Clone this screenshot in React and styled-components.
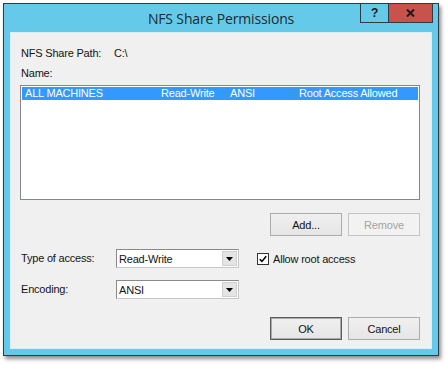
import React from 'react';
import styled, { createGlobalStyle } from 'styled-components';

const Global = createGlobalStyle`
  html, body { margin: 0; padding: 0; background: #ffffff; }
  body {
    width: 447px; height: 366px; overflow: hidden;
    font-family: "Liberation Sans", Arial, sans-serif;
    font-size: 11px; color: #141414;
    letter-spacing: -0.2px;
  }
  * { box-sizing: border-box; }
`;

const Page = styled.div`
  padding: 3px 0 0 3px;
`;

const Window = styled.div`
  width: 436px;
  height: 353px;
  border: 1px solid #2f3d42;
  background: #65c9ea;
  display: flex;
  flex-direction: column;
  box-shadow: 2px 3px 4px rgba(0, 0, 0, 0.45);
`;

const TitleBar = styled.div`
  height: 28px;
  display: grid;
  grid-template-columns: 1fr auto 1fr;
  align-items: start;
`;

const Title = styled.div`
  grid-column: 2;
  align-self: center;
  font-family: "Open Sans", "Noto Sans", sans-serif;
  font-size: 14px;
  color: #1c2b2b;
  letter-spacing: -0.15px;
  padding-top: 1px;
`;

const Caption = styled.div`
  grid-column: 3;
  justify-self: end;
  display: flex;
  margin-right: 5px;
`;

const CapButton = styled.div`
  width: ${p => p.$w}px;
  height: 19px;
  background: ${p => p.$bg};
  border: 1px solid #2f3d42;
  border-top: none;
  border-right: ${p => (p.$last ? '1px solid #2f3d42' : 'none')};
  display: flex;
  align-items: center;
  justify-content: center;
  font-family: "Liberation Sans", Arial, sans-serif;
  font-weight: bold;
  font-size: 12px;
  color: #1a1a1a;
`;

const Panel = styled.div`
  flex: 1;
  margin: 0 6px 6px 6px;
  background: #f0f0f0;
  border: 1px solid #d9eef6;
  padding: 14px 11px 0 9px;
  display: flex;
  flex-direction: column;
`;

const PathRow = styled.div`
  display: grid;
  grid-template-columns: 93px auto;
  height: 13px;
  line-height: 13px;
  padding-left: 1px;
`;

const Label = styled.div`
  line-height: 13px;
  padding-left: 1px;
  margin-top: ${p => p.$mt || 0}px;
`;

const List = styled.div`
  margin-top: 5px;
  height: 115px;
  background: #ffffff;
  border: 1px solid #828790;
  padding: 1px;
`;

const Row = styled.div`
  height: 13px;
  line-height: 13px;
  background: #3399ff;
  color: #ffffff;
  display: grid;
  grid-template-columns: 136px 69px 69px 1fr;
  padding-left: 3px;
`;

const ButtonRow = styled.div`
  margin-top: ${p => p.$mt}px;
  display: flex;
  justify-content: flex-end;
  gap: 6px;
`;

const Button = styled.div`
  width: 72px;
  height: 23px;
  display: flex;
  align-items: center;
  justify-content: center;
  background: ${p => (p.$disabled ? '#f2f2f2' : 'linear-gradient(#f0f0f0, #e5e5e5)')};
  border: 1px solid ${p => (p.$default ? '#5c5c5c' : p.$disabled ? '#c4c4c4' : '#acacac')};
  box-shadow: ${p => (p.$default ? 'inset 0 0 0 1px #a9a9a9' : 'none')};
  color: ${p => (p.$disabled ? '#a3a3a3' : '#141414')};
`;

const Form = styled.div`
  margin-top: 13px;
  display: grid;
  grid-template-columns: 96px 123px auto;
  grid-auto-rows: 19px;
  row-gap: 12px;
  align-items: center;
`;

const Combo = styled.div`
  height: 19px;
  background: #ffffff;
  border: 1px solid #8a8a8a;
  border-right-color: #c8c8c8;
  border-bottom-color: #c8c8c8;
  display: flex;
  align-items: center;
  justify-content: space-between;
  padding: 1px 1px 1px 2px;
`;

const DropBtn = styled.div`
  width: 15px;
  height: 15px;
  background: #e4e4e4;
  border: 1px solid #d0d0d0;
  display: flex;
  align-items: center;
  justify-content: center;
`;

const Check = styled.div`
  display: flex;
  align-items: center;
  gap: 4px;
  margin-left: 18px;
`;

const Box = styled.div`
  width: 12px;
  height: 12px;
  background: #ffffff;
  border: 1px solid #333333;
  display: flex;
  align-items: center;
  justify-content: center;
`;

const Arrow = () => (
  <svg width="7" height="4" viewBox="0 0 7 4">
    <path d="M0 0h7L3.5 4z" fill="#000" />
  </svg>
);

const Dropdown = ({ value }) => (
  <Combo>
    <span>{value}</span>
    <DropBtn><Arrow /></DropBtn>
  </Combo>
);

export default function App() {
  return (
    <>
      <Global />
      <Page>
        <Window>
          <TitleBar>
            <Title>NFS Share Permissions</Title>
            <Caption>
              <CapButton $w={28} $bg="#65c9ea">?</CapButton>
              <CapButton $w={45} $bg="#c7534c" $last>
                <svg width="9" height="8" viewBox="0 0 9 8">
                  <path d="M1 0.5L8 7.5M8 0.5L1 7.5" stroke="#1a1a1a" strokeWidth="2" />
                </svg>
              </CapButton>
            </Caption>
          </TitleBar>
          <Panel>
            <PathRow>
              <span>NFS Share Path:</span>
              <span>C:\</span>
            </PathRow>
            <Label $mt={7}>Name:</Label>
            <List>
              <Row>
                <span>ALL MACHINES</span>
                <span>Read-Write</span>
                <span>ANSI</span>
                <span>Root Access Allowed</span>
              </Row>
            </List>
            <ButtonRow $mt={13}>
              <Button>Add...</Button>
              <Button $disabled>Remove</Button>
            </ButtonRow>
            <Form>
              <Label>Type of access:</Label>
              <Dropdown value="Read-Write" />
              <Check>
                <Box>
                  <svg width="8" height="8" viewBox="0 0 8 8">
                    <path d="M0.8 4.2L3 6.4L7.2 1.2" stroke="#000" strokeWidth="1.6" fill="none" />
                  </svg>
                </Box>
                <span>Allow root access</span>
              </Check>
              <Label>Encoding:</Label>
              <Dropdown value="ANSI" />
            </Form>
            <ButtonRow $mt={18}>
              <Button $default>OK</Button>
              <Button>Cancel</Button>
            </ButtonRow>
          </Panel>
        </Window>
      </Page>
    </>
  );
}
